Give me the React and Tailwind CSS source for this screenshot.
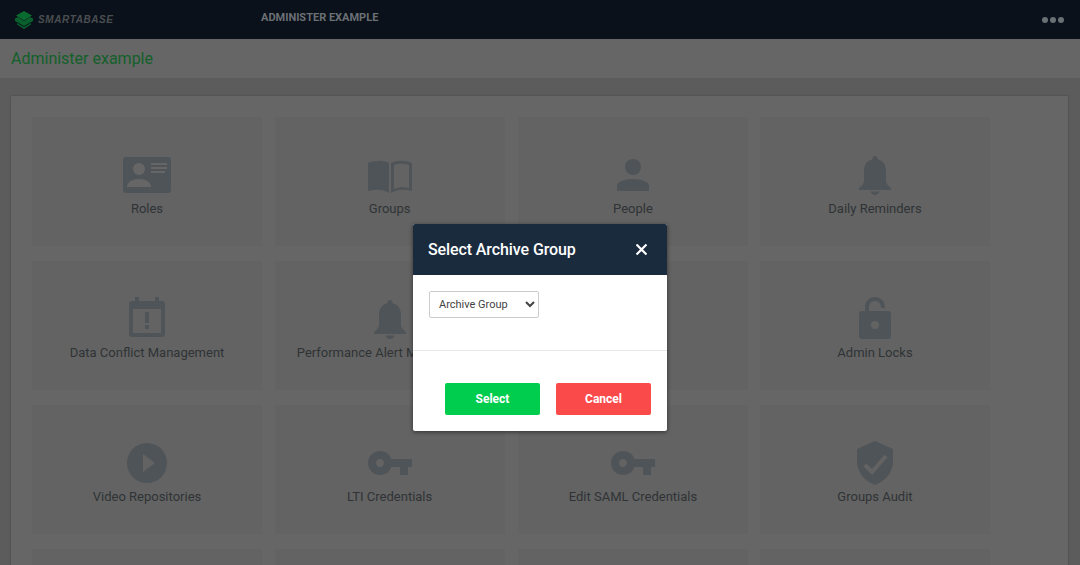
import React from "react";
import { MdVpnKey } from "react-icons/md";

const ic = "#4f5458";

const Card = () => (
  <svg width="48" height="36" viewBox="0 0 48 36">
    <rect width="48" height="36" rx="3" fill={ic} />
    <circle cx="16" cy="12" r="6" fill="#666666" />
    <path d="M4 30C4 25 9 22 16 22C23 22 28 25 28 30Z" fill="#666666" />
    <rect x="28" y="6" width="16" height="2" fill="#666666" />
    <rect x="28" y="10" width="16" height="2" fill="#666666" />
    <rect x="28" y="14" width="14" height="2" fill="#666666" />
  </svg>
);
const Book = () => (
  <svg width="44" height="33" viewBox="0 0 44 33" fill={ic} className="mt-[3px]">
    <path d="M0 3C7 0 15 0 21 3V33C15 29 7 29 0 31Z" />
    <path fillRule="evenodd" d="M23 3C29 0 37 0 44 3V31C37 29 29 29 23 33ZM26 5V29C31 27 36 27 41 28V5C36 3 31 3 26 5Z" />
  </svg>
);
const Person = () => (
  <svg width="32" height="32" viewBox="0 0 32 32" fill={ic}>
    <circle cx="16" cy="8" r="8" />
    <path d="M0 32V27C0 23 7 20 16 20C25 20 32 23 32 27V32Z" />
  </svg>
);
const Bell = () => (
  <svg width="32" height="39" viewBox="0 0 32 39" fill={ic}>
    <circle cx="16" cy="2.500" r="2.500" />
    <path d="M16 3C23 3 27 8 27 15V25C27 28 30 30 32 32V34H0V32C2 30 5 28 5 25V15C5 8 9 3 16 3Z" />
    <path d="M11.500 35.500H20.500C20 37.500 18 39 16 39C14 39 12 37.500 11.500 35.500Z" />
  </svg>
);
const Cal = () => (
  <svg width="36" height="40" viewBox="0 0 36 40" fill={ic} className="-mb-[4px] -mt-[4px] relative -top-[2px]">
    <path fillRule="evenodd" d="M6 0H10V4H26V0H30V4H33C34.700 4 36 5.300 36 7V37C36 38.700 34.700 40 33 40H3C1.300 40 0 38.700 0 37V7C0 5.300 1.300 4 3 4H6ZM4 12V36H32V12Z" />
    <rect x="16" y="15" width="4" height="11" />
    <rect x="16" y="28" width="4" height="4" />
  </svg>
);
const Lock = () => (
  <svg width="32" height="42" viewBox="0 0 32 42" fill={ic} className="relative -top-[1px]">
    <path d="M6 14V10C6 4.500 10.500 0 16 0C21.500 0 26 4.500 26 10V11H22V10C22 6.700 19.300 4 16 4C12.700 4 10 6.700 10 10V14Z" />
    <path fillRule="evenodd" d="M3 14H29C30.700 14 32 15.300 32 17V39C32 40.700 30.700 42 29 42H3C1.300 42 0 40.700 0 39V17C0 15.300 1.300 14 3 14ZM16 24A4 4 0 1 0 16 32A4 4 0 1 0 16 24Z" />
  </svg>
);
const Play = () => (
  <svg width="40" height="40" viewBox="0 0 40 40" fill={ic}>
    <path fillRule="evenodd" d="M20 0A20 20 0 1 0 20 40A20 20 0 1 0 20 0ZM16 11L28 20L16 29Z" />
  </svg>
);
const Shield = () => (
  <svg width="36" height="44" viewBox="0 0 36 44">
    <path d="M18 0L36 8V20C36 31 29 40 18 44C7 40 0 31 0 20V8Z" fill={ic} />
    <path d="M8 24L15 31L29 15" fill="none" stroke="#636363" strokeWidth="4" />
  </svg>
);

const cards = [
  ["Roles", <Card />],
  ["Groups", <Book />],
  ["People", <Person />],
  ["Daily Reminders", <Bell />],
  ["Data Conflict Management", <Cal />],
  ["Performance Alert Management", <Bell />],
  ["", null],
  ["Admin Locks", <Lock />],
  ["Video Repositories", <Play />],
  ["LTI Credentials", <MdVpnKey size={48} color={ic} />],
  ["Edit SAML Credentials", <MdVpnKey size={48} color={ic} />],
  ["Groups Audit", <Shield />],
  ["", null],
  ["", null],
  ["", null],
  ["", null],
];

export default function App() {
  return (
    <div className="relative w-[1080px] h-[565px] overflow-hidden bg-[#5c5c5c]" style={{ fontFamily: "Roboto, sans-serif" }}>
      <header className="h-[39px] bg-[#0a111a] flex items-center relative">
        <div className="w-[261px] pl-[15px] flex items-center gap-[5px] shrink-0">
          <svg width="18" height="18" viewBox="0 0 18 18" className="mt-[1px]">
            <path d="M9 0L17 4.500L9 9.500L1 4.500Z" fill="#0a6a30" />
            <path d="M0 7.500L3 6L9 10L15 6L18 7.500V10L9 15L0 10Z" fill="#09602c" />
            <path d="M2 12L9 16L16 12V13.500L9 18L2 13.500Z" fill="#09602c" />
          </svg>
          <span className="text-[10px] font-bold italic text-[#4a4e51] tracking-[0.6px]" style={{ fontFamily: "'Liberation Sans', sans-serif" }}>SMARTABASE</span>
        </div>
        <span className="text-[11px] font-bold text-[#6b7075] -mt-[2px]">ADMINISTER EXAMPLE</span>
        <div className="ml-auto mr-[16px] flex gap-[2px]">
          <span className="w-[6px] h-[6px] rounded-full bg-[#6b7075]" />
          <span className="w-[6px] h-[6px] rounded-full bg-[#6b7075]" />
          <span className="w-[6px] h-[6px] rounded-full bg-[#6b7075]" />
        </div>
      </header>
      <div className="h-[39px] bg-[#666666] flex items-center pl-[11px]">
        <span className="text-[16px] text-[#13602a]">Administer example</span>
      </div>
      <div className="pl-[11px] pr-[12px] pt-[18px]">
        <div className="bg-[#666666] h-[480px] pl-[21px] pt-[21px] shadow-[0_0_2px_rgba(0,0,0,0.25)]">
          <div className="grid grid-cols-[242.67px_243.33px_242px_230px] gap-y-[15px]">
            {cards.map(([label, icon], i) => (
              <div key={i} className="w-[230px] h-[129px] bg-[#636363] flex flex-col items-center">
                <div className="h-[44px] mt-[36px] flex items-center justify-center">{icon}</div>
                <span className="text-[13px] leading-[16px] mt-[4px] text-[#2f3336] whitespace-nowrap">{label}</span>
              </div>
            ))}
          </div>
        </div>
      </div>
      <div className="absolute left-[413px] top-[224px] w-[254px] h-[207px] bg-white rounded-[2px] shadow-[0_1px_4px_rgba(0,0,0,0.5)] overflow-hidden flex flex-col">
        <div className="h-[51px] bg-[#1b2b3e] flex items-center justify-between pl-[15px] pr-[20px] shrink-0">
          <span className="text-[16px] font-medium text-white tracking-[-0.1px]">Select Archive Group</span>
          <svg width="11" height="11" viewBox="0 0 11 11" fill="none" stroke="#ffffff" strokeWidth="2.2">
            <path d="M0.500 0.500L10.500 10.500M10.500 0.500L0.500 10.500" />
          </svg>
        </div>
        <div className="h-[76px] border-b border-[#e8e8e8] pl-[16px] pt-[16px] shrink-0">
          <select className="w-[110px] h-[27px] border border-[#cccccc] rounded-[2px] bg-white text-[11px] text-[#444] pl-[5px]" defaultValue="a">
            <option value="a">Archive Group</option>
          </select>
        </div>
        <div className="flex gap-[16px] pl-[32px] pt-[32px]">
          <button className="w-[95px] h-[32px] rounded-[2px] bg-[#00cc4e] text-white text-[12px] font-bold">Select</button>
          <button className="w-[95px] h-[32px] rounded-[2px] bg-[#fa4a4a] text-white text-[12px] font-bold">Cancel</button>
        </div>
      </div>
    </div>
  );
}
